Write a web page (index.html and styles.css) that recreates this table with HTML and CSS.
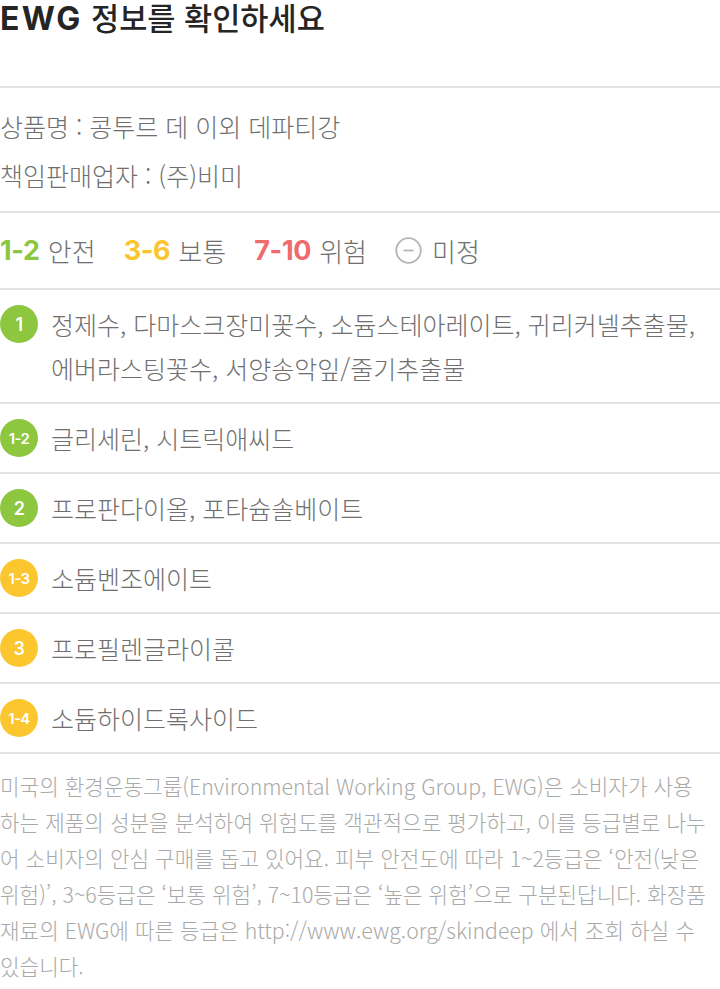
FILE: index.html
```html
<!DOCTYPE html>
<html lang="ko">
<head>
<meta charset="utf-8">
<title>EWG 정보</title>
<link rel="stylesheet" href="styles.css">
</head>
<body>
<div class="page">
  <h1 class="title"><span class="latin">EWG</span> 정보를 확인하세요</h1>

  <section class="info">
    <p>상품명 : 콩투르 데 이외 데파티강</p>
    <p>책임판매업자 : (주)비미</p>
  </section>

  <section class="legend">
    <span class="lg"><b class="num green">1-2</b> 안전</span>
    <span class="lg"><b class="num yellow">3-6</b> 보통</span>
    <span class="lg"><b class="num red">7-10</b> 위험</span>
    <span class="lg"><svg class="minus" width="27" height="27" viewBox="0 0 27 27"><circle cx="13.5" cy="13.5" r="12.3" fill="none" stroke="#b5b5b5" stroke-width="1.8"/><line x1="8.5" y1="13.5" x2="18.5" y2="13.5" stroke="#b5b5b5" stroke-width="1.8"/></svg> 미정</span>
  </section>

  <ul class="rows">
    <li class="row"><span class="badge green">1</span><span class="txt">정제수, 다마스크장미꽃수, 소듐스테아레이트, 귀리커넬추출물, 에버라스팅꽃수, 서양송악잎/줄기추출물</span></li>
    <li class="row"><span class="badge green small">1-2</span><span class="txt">글리세린, 시트릭애씨드</span></li>
    <li class="row"><span class="badge green">2</span><span class="txt">프로판다이올, 포타슘솔베이트</span></li>
    <li class="row"><span class="badge yellow small">1-3</span><span class="txt">소듐벤조에이트</span></li>
    <li class="row"><span class="badge yellow">3</span><span class="txt">프로필렌글라이콜</span></li>
    <li class="row"><span class="badge yellow small">1-4</span><span class="txt">소듐하이드록사이드</span></li>
  </ul>

  <p class="note">미국의 환경운동그룹(Environmental Working Group, EWG)은 소비자가 사용<br>하는 제품의 성분을 분석하여 위험도를 객관적으로 평가하고, 이를 등급별로 나누<br>어 소비자의 안심 구매를 돕고 있어요. 피부 안전도에 따라 1~2등급은 ‘안전(낮은<br>위험)’, 3~6등급은 ‘보통 위험’, 7~10등급은 ‘높은 위험’으로 구분된답니다. 화장품<br>재료의 EWG에 따른 등급은 http://www.ewg.org/skindeep 에서 조회 하실 수<br>있습니다.</p>
</div>
</body>
</html>
```

FILE: styles.css
```css
* { box-sizing: border-box; }
html, body { margin: 0; padding: 0; background: #fff; }
body {
  font-family: "Noto Sans CJK KR", "Noto Sans", sans-serif;
  color: #6f6f6f;
}
.page { width: 720px; }

.title {
  margin: 0;
  height: 86px;
  font-size: 30.6px;
  line-height: 34px;
  font-weight: 500;
  color: #252525;
}
.title .latin {
  font-family: Inter, "Noto Sans CJK KR", sans-serif;
  font-weight: 700;
  font-size: 32px;
  letter-spacing: 2.2px;
}

.info {
  border-top: 2px solid #e2e2e2;
  padding: 14px 0 11px;
  font-weight: 300;
  font-size: 25px;
}
.info p {
  margin: 0;
  line-height: 49px;
}

.legend {
  border-top: 2px solid #e2e2e2;
  height: 77px;
  display: flex;
  align-items: center;
  gap: 28px;
  font-size: 26px;
  font-weight: 300;
}
.lg {
  display: flex;
  align-items: center;
  gap: 8px;
}
.num {
  font-family: Inter, sans-serif;
  font-weight: 700;
  font-size: 27px;
  letter-spacing: -0.3px;
}
.num.green { color: #8dc63f; }
.num.yellow { color: #fbc52e; }
.num.red { color: #ee6c6c; }
.minus { display: block; margin-right: 2px; }

.rows { list-style: none; margin: 0; padding: 0; }
.row {
  border-top: 2px solid #e2e2e2;
  display: flex;
  align-items: flex-start;
  gap: 13px;
  padding: 12px 0;
}
.badge {
  flex: none;
  width: 38px;
  height: 38px;
  margin-top: 3px;
  border-radius: 50%;
  color: #fff;
  display: flex;
  align-items: center;
  justify-content: center;
  font-family: Inter, sans-serif;
  font-weight: 600;
  font-size: 18px;
  letter-spacing: -0.5px;
}
.badge.small { font-size: 15px; letter-spacing: -0.6px; }
.badge.green { background: #8dc63f; }
.badge.yellow { background: #fcc62f; }
.txt {
  font-size: 25px;
  font-weight: 300;
  line-height: 44px;
}

.note {
  margin: 0;
  border-top: 2px solid #e2e2e2;
  padding-top: 14px;
  font-size: 21.3px;
  line-height: 36px;
  font-weight: 300;
  color: #a9a9a9;
  white-space: nowrap;
}
```
